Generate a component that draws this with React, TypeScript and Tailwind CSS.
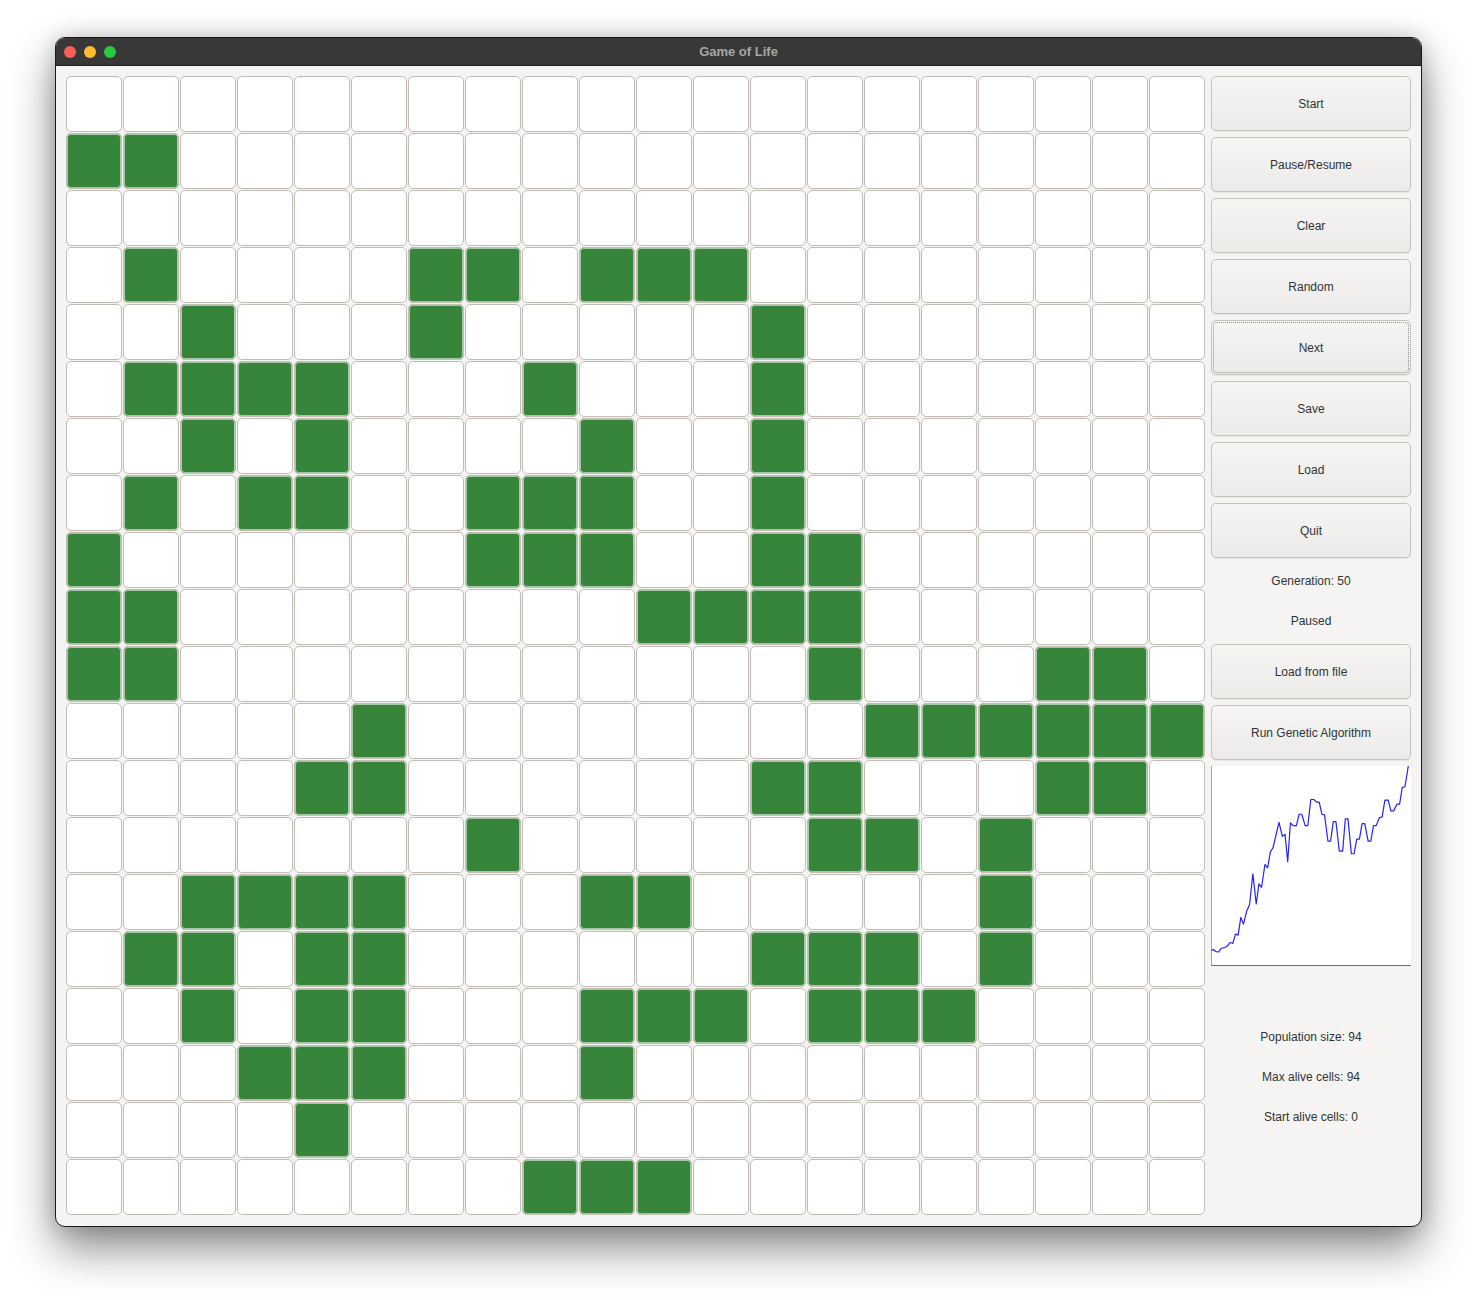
import React from "react";

const ALIVE: Record<number, number[]> = {
  1: [0, 1],
  3: [1, 6, 7, 9, 10, 11],
  4: [2, 6, 12],
  5: [1, 2, 3, 4, 8, 12],
  6: [2, 4, 9, 12],
  7: [1, 3, 4, 7, 8, 9, 12],
  8: [0, 7, 8, 9, 12, 13],
  9: [0, 1, 10, 11, 12, 13],
  10: [0, 1, 13, 17, 18],
  11: [5, 14, 15, 16, 17, 18, 19],
  12: [4, 5, 12, 13, 17, 18],
  13: [7, 13, 14, 16],
  14: [2, 3, 4, 5, 9, 10, 16],
  15: [1, 2, 4, 5, 12, 13, 14, 16],
  16: [2, 4, 5, 9, 10, 11, 13, 14, 15],
  17: [3, 4, 5, 9],
  18: [4],
  19: [8, 9, 10],
};

const CHART =
  "35,568 42,566 50,572 58,573 66,562 76,560 84,555 92,545 100,548 108,520 116,523 124,470 132,490 142,450 150,432 160,340 170,430 178,370 186,380 196,312 204,322 212,275 220,262 238,186 248,228 256,222 264,304 272,188 280,196 290,196 298,162 306,162 316,196 324,196 333,118 342,118 350,126 358,126 366,162 374,164 384,242 392,242 400,184 408,184 418,272 428,272 436,176 444,176 454,280 462,280 470,236 478,236 486,190 494,190 504,242 512,242 520,196 528,196 538,172 546,170 554,120 564,120 572,152 580,152 590,132 598,132 606,82 614,80 624,18";

function Btn({ label, focused }: { label: string; focused?: boolean }) {
  return (
    <div className="relative h-[55px] w-[200px] rounded-[5px] border border-[#c8c2bc] bg-gradient-to-b from-[#f6f5f4] to-[#edebe9] shadow-[0_1px_1px_rgba(0,0,0,0.06)] flex items-center justify-center text-[12px] text-[#2e3436]">
      {focused && (
        <div className="absolute inset-[1px] rounded-[4px] border border-dotted border-[#8e8e8e]" />
      )}
      <span>{label}</span>
    </div>
  );
}

function Label({ text }: { text: string }) {
  return (
    <div className="h-[34px] w-[200px] flex items-center justify-center text-[12px] text-[#2e3436]">
      {text}
    </div>
  );
}

export default function App() {
  const rows = Array.from({ length: 20 }, (_, r) => r);
  const cols = Array.from({ length: 20 }, (_, c) => c);
  return (
    <div
      className="w-[1477px] h-[1300px] bg-white pt-[37px] pl-[55px]"
      style={{ fontFamily: '"Liberation Sans", Arial, sans-serif' }}
    >
      <div className="w-[1367px] h-[1190px] rounded-[10px] border border-[#1a1a1a] bg-[#f5f4f2] overflow-hidden flex flex-col shadow-[0_22px_45px_rgba(0,0,0,0.45),0_0_22px_rgba(0,0,0,0.18)]">
        {/* title bar */}
        <div className="relative h-[28px] shrink-0 bg-[#383838] border-b border-[#1e1e1e] flex items-center justify-center">
          <div className="absolute left-[8px] top-[8px] flex gap-[8px]">
            <div className="w-[12px] h-[12px] rounded-full bg-[#fe5f57]" />
            <div className="w-[12px] h-[12px] rounded-full bg-[#febc2e]" />
            <div className="w-[12px] h-[12px] rounded-full bg-[#28c840]" />
          </div>
          <span className="text-[13px] font-bold text-[#a6a6a6]">Game of Life</span>
        </div>
        {/* content */}
        <div className="flex pt-[10px] pl-[10px] gap-[6px]">
          <div className="grid grid-cols-[repeat(20,56px)] grid-rows-[repeat(20,56px)] gap-[1px]">
            {rows.map((r) =>
              cols.map((c) => {
                const alive = (ALIVE[r] || []).includes(c);
                return (
                  <div
                    key={`${r}-${c}`}
                    className={
                      alive
                        ? "rounded-[5px] border border-[#c2bcb6] bg-[#36853a] shadow-[inset_0_0_0_1px_rgba(255,255,255,0.55)]"
                        : "rounded-[5px] border border-[#c2bcb6] bg-white"
                    }
                  />
                );
              })
            )}
          </div>
          <div className="flex flex-col gap-[6px]">
            <Btn label="Start" />
            <Btn label="Pause/Resume" />
            <Btn label="Clear" />
            <Btn label="Random" />
            <Btn label="Next" focused />
            <Btn label="Save" />
            <Btn label="Load" />
            <Btn label="Quit" />
            <Label text="Generation: 50" />
            <Label text="Paused" />
            <Btn label="Load from file" />
            <Btn label="Run Genetic Algorithm" />
            <div className="w-[200px] h-[200px] bg-white">
              <svg width="200" height="200" viewBox="35 18 597 597" preserveAspectRatio="none">
                <polyline
                  points={CHART}
                  fill="none"
                  stroke="#2323ff"
                  strokeWidth={1.2}
                  vectorEffect="non-scaling-stroke"
                  strokeLinejoin="round"
                />
                <line x1="35" y1="18" x2="35" y2="615" stroke="#6a6a7a" strokeWidth={1.2} vectorEffect="non-scaling-stroke" />
                <line x1="35" y1="614" x2="632" y2="614" stroke="#6a6a7a" strokeWidth={1.2} vectorEffect="non-scaling-stroke" />
              </svg>
            </div>
            <div className="h-[42px]" />
            <Label text="Population size: 94" />
            <Label text="Max alive cells: 94" />
            <Label text="Start alive cells: 0" />
          </div>
        </div>
      </div>
    </div>
  );
}
